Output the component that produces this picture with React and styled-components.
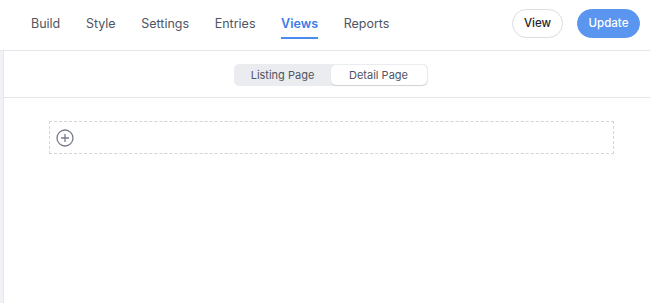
import styled, { createGlobalStyle } from 'styled-components';

const GlobalStyle = createGlobalStyle`
  body {
    margin: 0;
    font-family: Inter, "Noto Sans", sans-serif;
    background: #fff;
  }
`;

const Page = styled.div`
  width: 650px;
  height: 303px;
  overflow: hidden;
  display: flex;
  flex-direction: column;
`;

const Header = styled.header`
  height: 51px;
  display: flex;
  align-items: center;
  justify-content: space-between;
  padding: 0 10px 4px 31px;
  border-bottom: 1px solid #e4e5ea;
  box-sizing: border-box;
  flex-shrink: 0;
`;

const Tabs = styled.nav`
  display: flex;
  gap: 25.6px;
  height: 100%;
`;

const Tab = styled.div`
  position: relative;
  display: flex;
  align-items: center;
  font-size: 12.5px;
  font-weight: ${p => (p.$active ? 600 : 400)};
  color: ${p => (p.$active ? '#3b7de9' : '#4f5563')};

  &::after {
    content: '';
    display: ${p => (p.$active ? 'block' : 'none')};
    position: absolute;
    left: 0;
    right: 0;
    top: 37px;
    height: 2px;
    background: #4a8bef;
  }
`;

const Actions = styled.div`
  display: flex;
  gap: 14px;
  align-items: center;
`;

const Button = styled.button`
  width: ${p => (p.$primary ? 63 : 51)}px;
  height: 29px;
  padding: 0;
  border-radius: 15px;
  font-family: Inter, sans-serif;
  font-size: 11.5px;
  font-weight: 500;
  border: 1px solid ${p => (p.$primary ? '#5a95f0' : '#dcdde2')};
  background: ${p => (p.$primary ? '#5a95f0' : '#fff')};
  color: ${p => (p.$primary ? '#fff' : '#1f2430')};
`;

const Body = styled.div`
  flex: 1;
  display: flex;
`;

const SideStrip = styled.div`
  width: 3px;
  background: #f1f2f5;
  border-right: 1px solid #e6e7eb;
`;

const Main = styled.main`
  flex: 1;
  display: flex;
  flex-direction: column;
`;

const Toolbar = styled.div`
  height: 47px;
  display: flex;
  align-items: center;
  justify-content: center;
  border-bottom: 1px solid #e4e5ea;
  box-sizing: border-box;
  padding: 2px 0 0 7px;
`;

const Segmented = styled.div`
  display: flex;
  background: #ebecef;
  border-radius: 5px;
  padding: 1px;
  height: 22px;
  box-sizing: border-box;
`;

const Segment = styled.div`
  display: flex;
  align-items: center;
  justify-content: center;
  width: ${p => p.$w}px;
  font-size: 11px;
  color: #4f5563;
  border-radius: 5px;
  background: ${p => (p.$active ? '#fff' : 'transparent')};
  box-shadow: ${p => (p.$active ? '0 1px 1px rgba(0,0,0,0.12)' : 'none')};
`;

const Canvas = styled.div`
  padding: 23px 36px 0 45px;
`;

const DropZone = styled.div`
  height: 31px;
  border: 1px dashed #d3d5db;
  display: flex;
  align-items: center;
  padding-left: 6px;
`;

const PlusIcon = () => (
  <svg width="18" height="18" viewBox="0 0 18 18" fill="none">
    <circle cx="9" cy="9" r="8" stroke="#777c8c" strokeWidth="1.3" />
    <path d="M9 5v8M5 9h8" stroke="#777c8c" strokeWidth="1.3" />
  </svg>
);

const tabs = ['Build', 'Style', 'Settings', 'Entries', 'Views', 'Reports'];

export default function App() {
  return (
    <Page>
      <GlobalStyle />
      <Header>
        <Tabs>
          {tabs.map(t => (
            <Tab key={t} $active={t === 'Views'}>
              {t}
            </Tab>
          ))}
        </Tabs>
        <Actions>
          <Button type="button">View</Button>
          <Button type="button" $primary>
            Update
          </Button>
        </Actions>
      </Header>
      <Body>
        <SideStrip />
        <Main>
          <Toolbar>
            <Segmented>
              <Segment $w={96}>Listing Page</Segment>
              <Segment $w={96} $active>
                Detail Page
              </Segment>
            </Segmented>
          </Toolbar>
          <Canvas>
            <DropZone>
              <PlusIcon />
            </DropZone>
          </Canvas>
        </Main>
      </Body>
    </Page>
  );
}
